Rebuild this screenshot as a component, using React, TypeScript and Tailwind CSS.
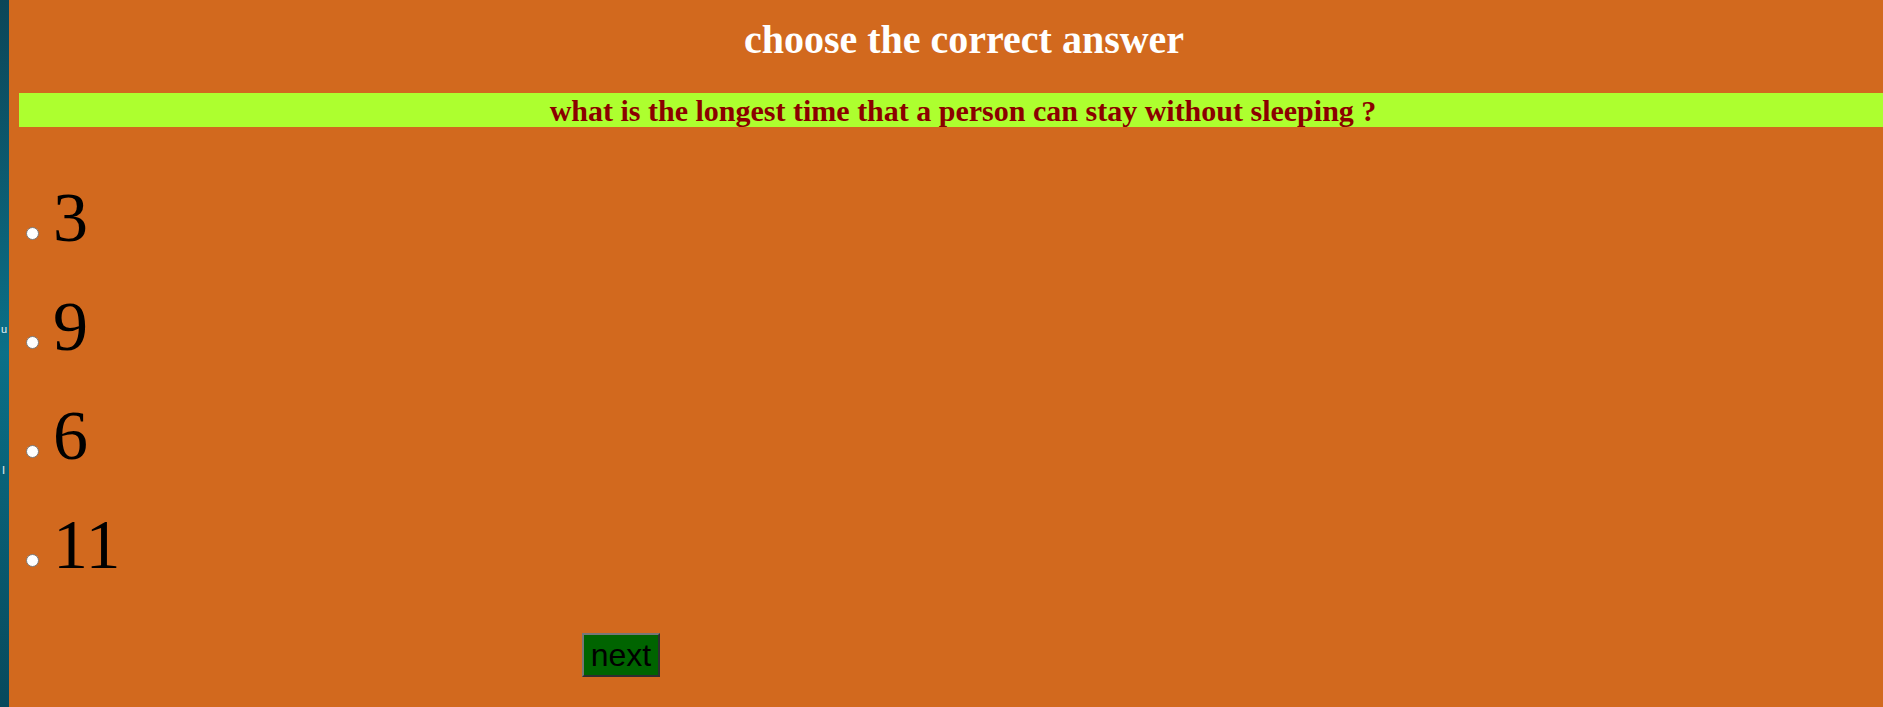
import React from "react";

const answers = ["3", "9", "6", "11"];

export default function App() {
  return (
    <div className="flex h-screen w-full overflow-hidden">
      {/* desktop edge behind the window */}
      <div className="flex w-[9px] shrink-0 flex-col overflow-hidden bg-gradient-to-b from-[#0b4658] via-[#0a7088] to-[#07495c] font-['Liberation_Sans',sans-serif] text-[11px] leading-none text-white/90">
        <span className="ml-[1px] mt-[324px]">u</span>
        <span className="ml-[2px] mt-[130px]">I</span>
      </div>

      <main className="flex-1 bg-[#d2691e] font-['Liberation_Serif',serif]">
        <h1 className="pl-[36px] pt-[20px] text-center text-[40px] font-bold leading-none text-white">
          choose the correct answer
        </h1>

        <div className="ml-[10px] mt-[33px] flex h-[34px] items-center justify-center bg-[#adff2f] pl-[24px] text-[30px] font-bold text-[#8b0000]">
          what is the longest time that a person can stay without sleeping ?
        </div>

        <div className="mt-[38px] flex flex-col">
          {answers.map((a) => (
            <label key={a} className="flex h-[109px] items-end">
              <input
                type="radio"
                name="answer"
                className="mb-[34px] ml-[17px] mr-[14px] h-[13px] w-[13px] shrink-0 appearance-none rounded-full border border-[#7a7a7a] bg-white"
              />
              <span className="pb-[21px] text-[70px] leading-none text-black">{a}</span>
            </label>
          ))}
        </div>

        <div className="mt-[32px] pl-[573px]">
          <button className="flex h-[44px] w-[78px] items-center justify-center border-2 border-t-[#777] border-l-[#777] border-b-[#2e2e2e] border-r-[#2e2e2e] bg-[#006400] font-['Liberation_Sans',sans-serif] text-[32px] leading-none text-black">
            next
          </button>
        </div>
      </main>
    </div>
  );
}
